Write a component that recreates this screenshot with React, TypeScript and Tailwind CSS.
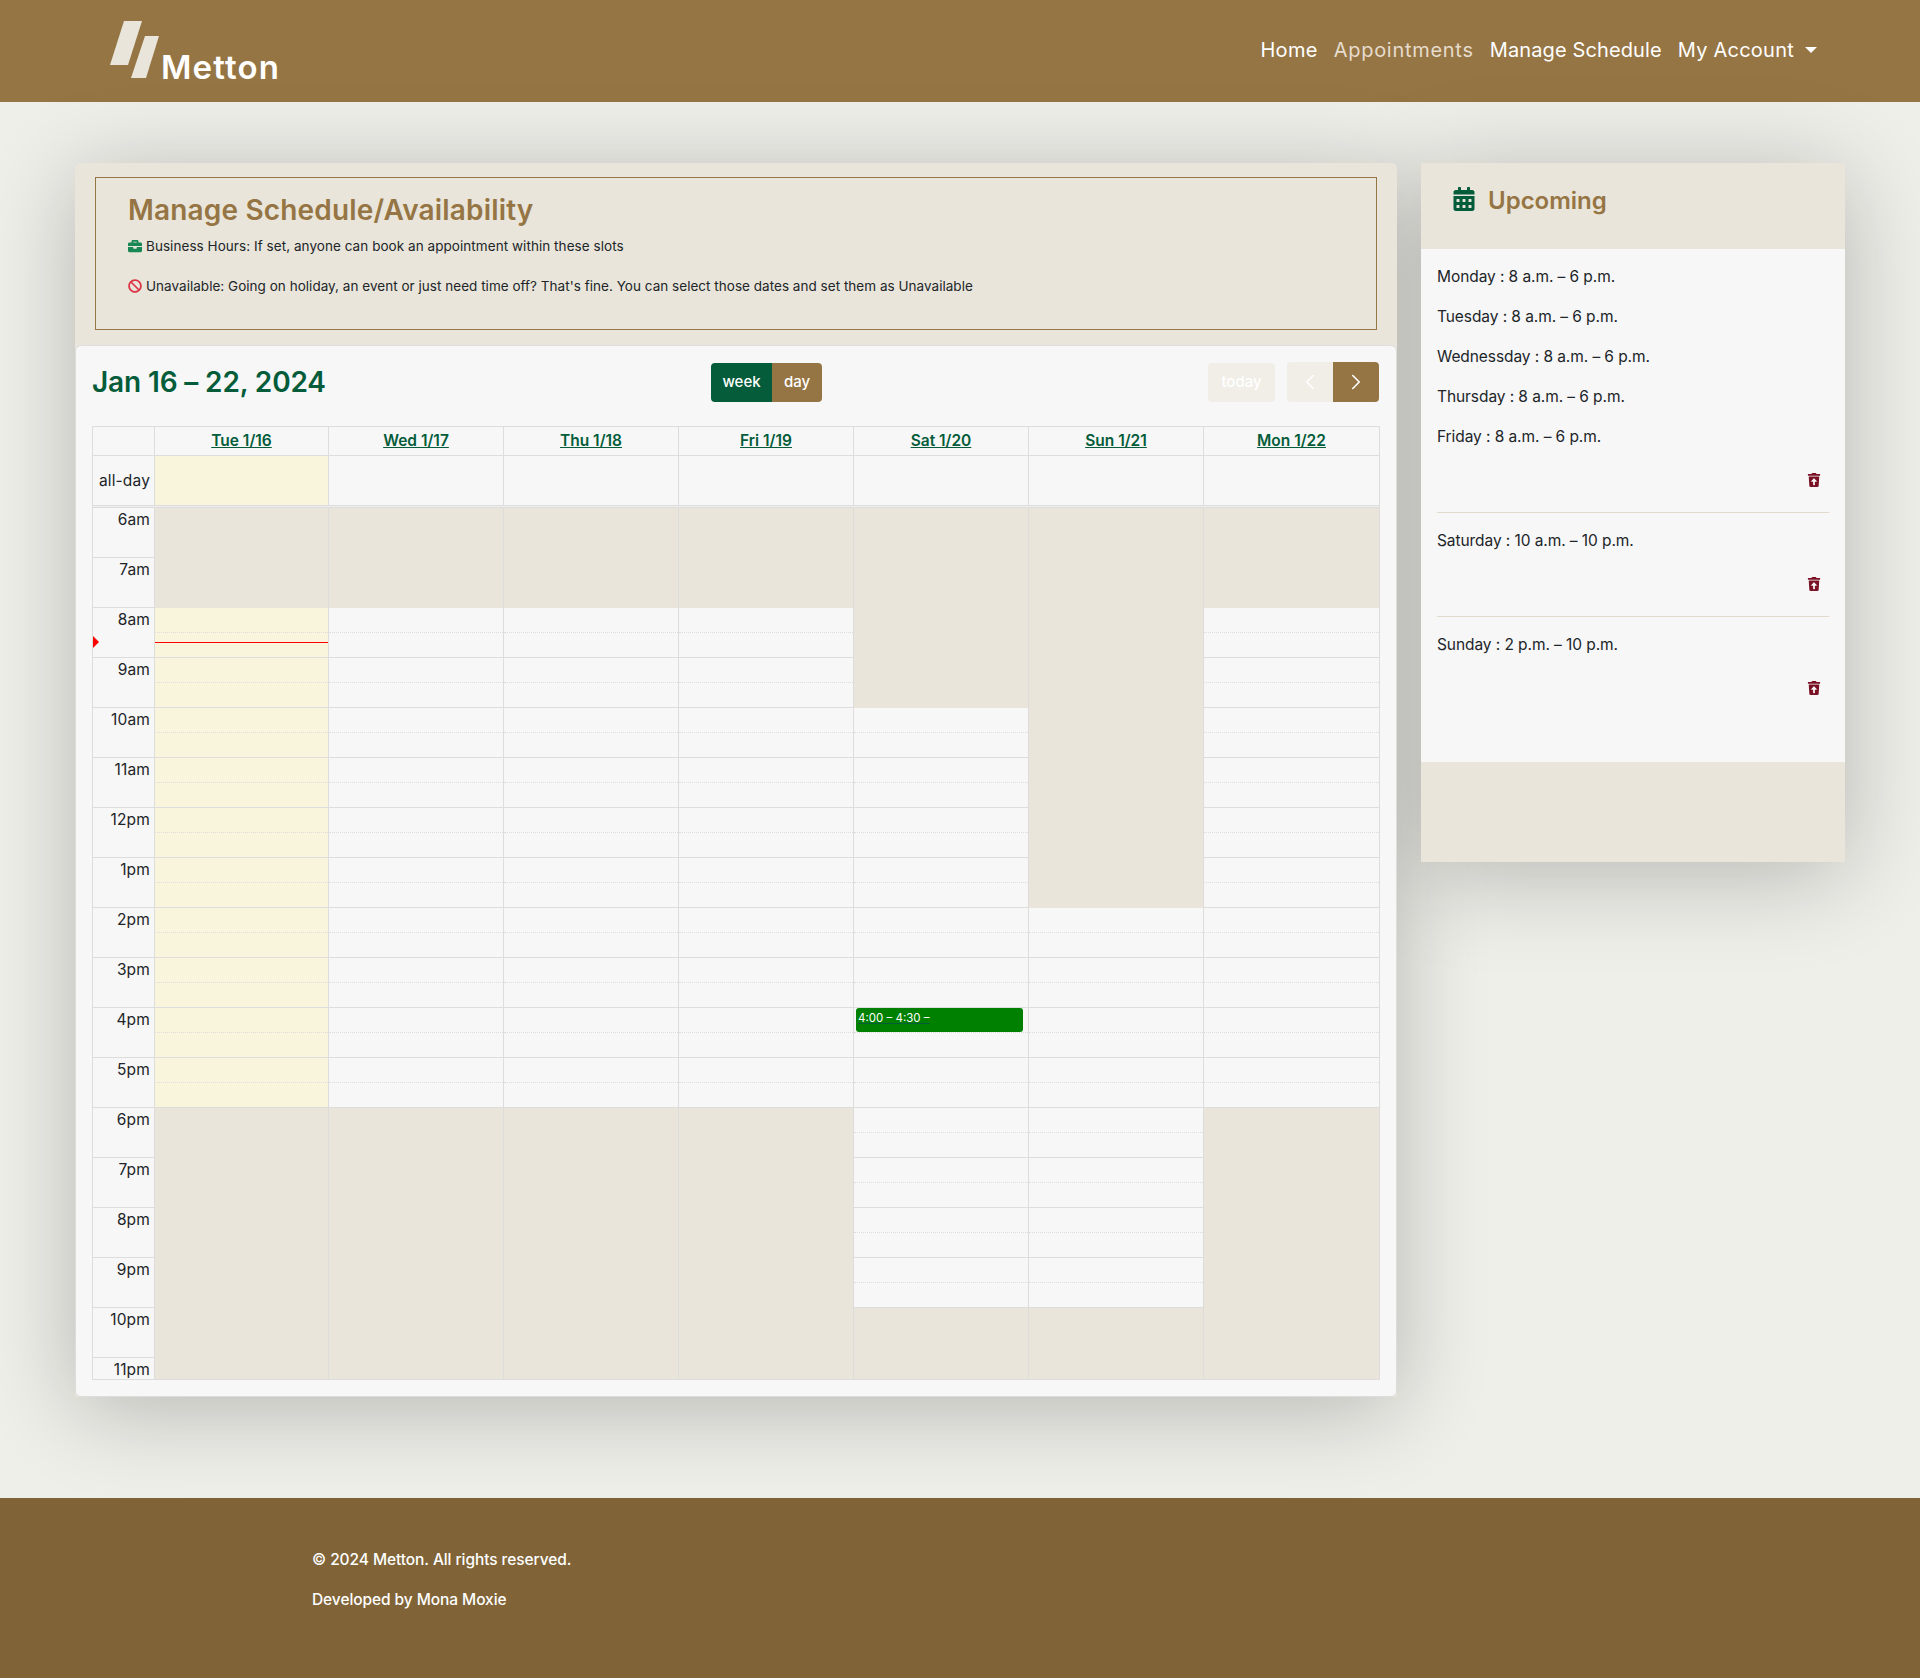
import { ChevronLeft, ChevronRight } from "lucide-react";
import { FaBan, FaBriefcase, FaCalendarAlt, FaTrashRestore } from "react-icons/fa";

const days = ["Tue 1/16", "Wed 1/17", "Thu 1/18", "Fri 1/19", "Sat 1/20", "Sun 1/21", "Mon 1/22"];

// opening hours per column, same order as days
const hours = [
  [8, 18],
  [8, 18],
  [8, 18],
  [8, 18],
  [10, 22],
  [14, 22],
  [8, 18],
];

const times = ["6am", "7am", "8am", "9am", "10am", "11am", "12pm", "1pm", "2pm", "3pm", "4pm", "5pm", "6pm", "7pm", "8pm", "9pm", "10pm", "11pm"];

const slots = Array.from({ length: 35 }, (_, i) => i);

const schedule = [
  ["Monday : 8 a.m. – 6 p.m.", "Tuesday : 8 a.m. – 6 p.m.", "Wednessday : 8 a.m. – 6 p.m.", "Thursday : 8 a.m. – 6 p.m.", "Friday : 8 a.m. – 6 p.m."],
  ["Saturday : 10 a.m. – 10 p.m."],
  ["Sunday : 2 p.m. – 10 p.m."],
];

function slotClass(day: number, slot: number) {
  const hour = 6 + slot / 2;
  const open = hour >= hours[day][0] && hour < hours[day][1];
  const height = slot === 34 ? "h-[21px]" : "h-[25px]";
  if (!open) return `${height} bg-[#e9e5da]`;
  const line = slot % 2 === 0 ? "border-b border-dotted border-[#dddddd]" : "border-b border-[#dddddd]";
  return day === 0 ? `${height} ${line} bg-[#f9f4dc]` : `${height} ${line}`;
}

// first day column is a pixel narrower than the others
function colWidth(day: number) {
  return day === 0 ? "w-[174px]" : "w-[175px]";
}

function Logo() {
  return (
    <svg width="50" height="58" viewBox="0 0 50 58" className="shrink-0">
      <polygon points="14,0 32,0 18,44 0,44" fill="#e9e5da" />
      <polygon points="35,15 49,15 36,57 21,57" fill="#e9e5da" />
    </svg>
  );
}

export default function App() {
  return (
    <div className="min-h-[1678px] bg-[#eeefe9] font-['Inter',sans-serif] text-[#212529]">
      <header className="flex h-[102px] items-start justify-between bg-[#967544] pl-[110px] pr-[95px]">
        <div className="flex items-end pt-[21px]">
          <Logo />
          <span className="-mb-[4px] ml-[1px] text-[33px] font-semibold leading-[32px] tracking-[0.035em] text-white">Metton</span>
        </div>
        <nav className="flex items-center pt-[35px] text-[20px] leading-[30px] tracking-[0.006em] text-white">
          <a className="px-2 tracking-[0.015em]">Home</a>
          <a className="px-2 tracking-[0.036em] text-[#e6dccc]">Appointments</a>
          <a className="px-2">Manage Schedule</a>
          <a className="flex items-center px-2 tracking-[0.012em]">
            My Account
            <span className="ml-[11px] h-0 w-0 border-x-[6px] border-t-[6px] border-x-transparent border-t-white" />
          </a>
        </nav>
      </header>

      <main className="flex items-start gap-6 pb-[101px] pl-[75px] pt-[61px]">
        <section className="w-[1322px] rounded-t-md shadow-[0_12px_90px_rgba(0,0,0,0.24)]">
          <div className="relative z-10 rounded-t-md bg-[#e9e5da]">
            <div className="mx-5 mb-[15px] mt-[14px] inline-block h-[153px] w-[1282px] border border-[#967544] pl-8 pt-[14px] align-top">
              <h1 className="text-[28px] font-semibold leading-9 tracking-[0.006em] text-[#967544]">Manage Schedule/Availability</h1>
              <p className="mt-[6px] flex items-center text-[13.5px] leading-6 tracking-[0.004em]">
                <FaBriefcase className="mr-[4px] text-[14px] text-[#198754]" />
                Business Hours: If set, anyone can book an appointment within these slots
              </p>
              <p className="mt-4 flex items-center text-[13.5px] leading-6 tracking-[0.002em]">
                <FaBan className="mr-[4px] text-[14px] text-[#dc3545]" />
                Unavailable: Going on holiday, an event or just need time off? That's fine. You can select those dates and set them as Unavailable
              </p>
            </div>

            <div className="rounded-md border border-[#dddddd] bg-[#f7f7f7] px-4 pb-4 pt-4">
              <div className="mb-6 flex h-10 w-[1287px] items-center">
                <h2 className="w-[619px] text-[28px] font-semibold tracking-[-0.005em] text-[#045c3a]">Jan 16 – 22, 2024</h2>
                <div className="flex h-[39px] overflow-hidden rounded text-[15px] font-medium leading-[38px] text-white">
                  <span className="w-[61px] bg-[#045c3a] text-center">week</span>
                  <span className="w-[50px] bg-[#967544] text-center">day</span>
                </div>
                <span className="ml-auto h-[39px] w-[67px] rounded bg-[#f0eee7] text-center text-[15px] font-medium leading-[38px] text-white">today</span>
                <div className="ml-3 flex h-10 overflow-hidden rounded text-white">
                  <span className="flex w-[46px] items-center justify-center bg-[#f0eee7]">
                    <ChevronLeft size={26} strokeWidth={1.5} />
                  </span>
                  <span className="flex w-[46px] items-center justify-center bg-[#967544]">
                    <ChevronRight size={26} strokeWidth={1.5} />
                  </span>
                </div>
              </div>

              <div className="w-[1288px] border border-[#dddddd] text-[15px]">
                <div className="flex h-[29px] border-b border-[#dddddd]">
                  <div className="w-[62px] border-r border-[#dddddd]" />
                  {days.map((d, i) => (
                    <div key={d} className={`${colWidth(i)} border-r border-[#dddddd] text-center text-[15.5px] font-semibold leading-[27px] text-[#045c3a] underline last:border-r-0`}>
                      {d}
                    </div>
                  ))}
                </div>
                <div className="flex h-[50px] border-b border-[#dddddd]">
                  <div className="w-[62px] border-r border-[#dddddd] pr-1 text-right text-[15.5px] leading-[50px] tracking-[0.01em]">all-day</div>
                  {days.map((d, i) => (
                    <div key={d} className={i === 0 ? "w-[174px] border-r border-[#dddddd] bg-[#f9f4dc]" : "w-[175px] border-r border-[#dddddd] last:border-r-0"} />
                  ))}
                </div>
                <div className="h-[1px] bg-[#eeeeee]" />
                <div className="flex border-t border-[#dddddd]">
                  <div className="relative w-[62px] border-r border-[#dddddd]">
                    <span className="absolute left-0 top-[128px] h-0 w-0 border-y-[6px] border-l-[6px] border-y-transparent border-l-[#ff0000]" />
                    {times.map((t) => (
                      <div key={t} className="h-[50px] border-b border-[#dddddd] pr-1 text-right text-[15.5px] leading-[23px] tracking-[0.01em] last:h-[21px] last:border-b-0">
                        {t}
                      </div>
                    ))}
                  </div>
                  {days.map((d, i) => (
                    <div key={d} className={`relative ${colWidth(i)} border-r border-[#dddddd] last:border-r-0`}>
                      {slots.map((s) => (
                        <div key={s} className={slotClass(i, s)} />
                      ))}
                      {i === 0 && <div className="absolute inset-x-0 top-[134px] h-[1px] bg-[#ff0000]" />}
                      {i === 4 && (
                        <div className="absolute left-[2px] top-[500px] h-6 w-[167px] rounded-[3px] bg-[#008000] pl-[2px] text-[11.5px] leading-[20px] text-white">
                          <span className="underline decoration-[#045c3a]">4:00 – 4:30 – </span>
                        </div>
                      )}
                    </div>
                  ))}
                </div>
              </div>
            </div>
          </div>
        </section>

        <aside className="w-[424px] shadow-[0_12px_90px_rgba(0,0,0,0.24)]">
          <div className="relative z-10 bg-[#e9e5da]">
            <div className="flex h-[86px] items-start pl-[31px] pt-[24px]">
              <FaCalendarAlt className="text-[24px] text-[#045c3a]" />
              <h3 className="ml-[12px] text-[24px] font-semibold leading-[28px] text-[#967544]">Upcoming</h3>
            </div>
            <div className="h-[513px] bg-[#f7f7f7] px-4 pt-4 text-[15.5px] leading-6 tracking-[-0.005em]">
              {schedule.map((group, i) => (
                <div key={i} className={i < 2 ? "mb-4 border-b border-[#e3d9cc]" : ""}>
                  {group.map((line) => (
                    <p key={line} className="mb-4">
                      {line}
                    </p>
                  ))}
                  <div className="mb-4 flex h-[31px] items-center justify-end pb-[2px] pr-2">
                    <FaTrashRestore className="text-[14px] text-[#7a1022]" />
                  </div>
                </div>
              ))}
            </div>
            <div className="h-[100px]" />
          </div>
        </aside>
      </main>

      <footer className="h-[180px] bg-[#806437] pl-[312px] pt-[50px] text-[15.5px] font-medium leading-6 tracking-[-0.005em] text-white">
        <p className="mb-4">© 2024 Metton. All rights reserved.</p>
        <p>Developed by Mona Moxie</p>
      </footer>
    </div>
  );
}
